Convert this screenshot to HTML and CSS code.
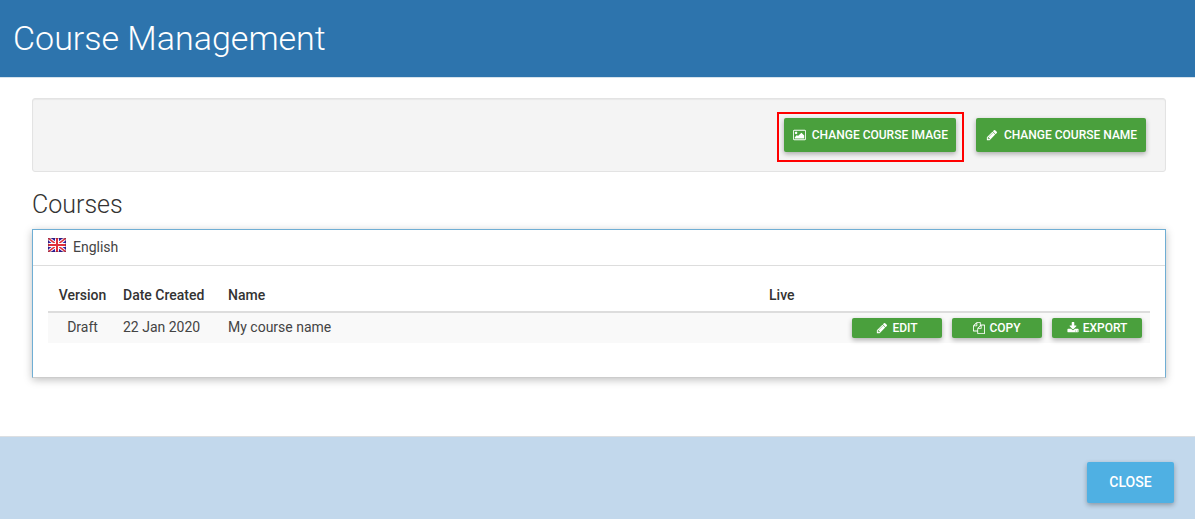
FILE: index.html
```html
<!DOCTYPE html>
<html lang="en">
<head>
<meta charset="utf-8">
<title>Course Management</title>
<link rel="stylesheet" href="styles.css">
</head>
<body>
<svg class="sprite" aria-hidden="true">
  <symbol id="pencil" viewBox="0 0 1792 1792"><path d="M491 1536l91-91-235-235-91 91v107h128v128h107zm523-928q0-22-22-22-10 0-17 7l-542 542q-7 7-7 17 0 22 22 22 10 0 17-7l542-542q7-7 7-17zm-54-192l416 416-832 832h-416v-416zm683 96q0 53-37 90l-166 166-416-416 166-165q36-38 90-38 53 0 91 38l235 234q37 39 37 91z"/></symbol>
  <symbol id="picture" viewBox="0 0 1920 1792"><path d="M640 576q0 80-56 136t-136 56-136-56-56-136 56-136 136-56 136 56 56 136zm1024 384v448h-1408v-192l320-320 160 160 512-512zm96-704h-1600q-13 0-22.500 9.500t-9.500 22.500v1216q0 13 9.500 22.500t22.500 9.500h1600q13 0 22.500-9.500t9.500-22.500v-1216q0-13-9.500-22.500t-22.500-9.500zm160 32v1216q0 66-47 113t-113 47h-1600q-66 0-113-47t-47-113v-1216q0-66 47-113t113-47h1600q66 0 113 47t47 113z"/></symbol>
  <symbol id="files" viewBox="0 0 1792 1792"><path d="M1696 384q40 0 68 28t28 68v1216q0 40-28 68t-68 28h-960q-40 0-68-28t-28-68v-288h-544q-40 0-68-28t-28-68v-672q0-40 20-88t48-76l408-408q28-28 76-48t88-20h416q40 0 68 28t28 68v328q68-40 128-40h416zm-544 213l-299 299h299v-299zm-640-384l-299 299h299v-299zm196 647l316-316v-416h-384v416q0 40-28 68t-68 28h-416v640h512v-256q0-40 20-88t48-76zm956 804v-1152h-384v416q0 40-28 68t-68 28h-416v640h896z"/></symbol>
  <symbol id="download" viewBox="0 0 1792 1792"><path d="M1344 1344q0-26-19-45t-45-19-45 19-19 45 19 45 45 19 45-19 19-45zm256 0q0-26-19-45t-45-19-45 19-19 45 19 45 45 19 45-19 19-45zm128-224v320q0 40-28 68t-68 28h-1472q-40 0-68-28t-28-68v-320q0-40 28-68t68-28h465l135 136q58 56 136 56t136-56l136-136h464q40 0 68 28t28 68zm-325-569q17 41-14 70l-448 448q-18 19-45 19t-45-19l-448-448q-31-29-14-70 17-39 59-39h256v-448q0-26 19-45t45-19h256q26 0 45 19t19 45v448h256q42 0 59 39z"/></symbol>
</svg>
<header class="page-header">
  <h1 class="page-title">Course Management</h1>
</header>
<main class="content">
  <div class="toolbar">
    <button type="button" class="btn btn-large highlighted"><svg class="icon icon-picture" aria-hidden="true"><use href="#picture"/></svg>CHANGE COURSE IMAGE</button>
    <button type="button" class="btn btn-large"><svg class="icon" aria-hidden="true"><use href="#pencil"/></svg>CHANGE COURSE NAME</button>
  </div>
  <h2 class="section-title">Courses</h2>
  <section class="panel">
    <div class="panel-heading">
      <svg class="flag" viewBox="0 0 18 14" aria-hidden="true">
        <rect width="18" height="14" fill="#2a1fa8"/>
        <path d="M0 0L18 14M18 0L0 14" stroke="#fff" stroke-width="3.500"/>
        <path d="M0 0L18 14M18 0L0 14" stroke="#e0303c" stroke-width="1.500"/>
        <path d="M9 0V14M0 7H18" stroke="#fff" stroke-width="4"/>
        <path d="M9 0V14M0 7H18" stroke="#e0303c" stroke-width="2"/>
        <rect x=".5" y=".5" width="17" height="13" fill="none" stroke="#401040" stroke-opacity=".35"/>
      </svg>
      <span>English</span>
    </div>
    <div class="panel-body">
      <table class="courses">
        <thead>
          <tr><th class="col-version" scope="col">Version</th><th class="col-date" scope="col">Date Created</th><th class="col-name" scope="col">Name</th><th scope="col" colspan="2">Live</th></tr>
        </thead>
        <tbody>
          <tr>
            <td class="col-version">Draft</td><td>22 Jan 2020</td><td>My course name</td><td></td>
            <td class="col-actions">
              <div class="actions">
                <button type="button" class="btn btn-small"><svg class="icon" aria-hidden="true"><use href="#pencil"/></svg>EDIT</button>
                <button type="button" class="btn btn-small"><svg class="icon" aria-hidden="true"><use href="#files"/></svg>COPY</button>
                <button type="button" class="btn btn-small"><svg class="icon" aria-hidden="true"><use href="#download"/></svg>EXPORT</button>
              </div>
            </td>
          </tr>
        </tbody>
      </table>
    </div>
  </section>
</main>
<footer class="page-footer">
  <button type="button" class="btn btn-close">CLOSE</button>
</footer>
</body>
</html>
```

FILE: styles.css
```css
* { box-sizing: border-box; }

body {
  margin: 0;
  min-height: 100vh;
  display: flex;
  flex-direction: column;
  background: #fff;
  color: #444;
  font: 14px/20px Roboto, "Liberation Sans", sans-serif;
}

.sprite { display: none; }

.page-header {
  padding: 18px 13px 19px;
  background: #2d74ad;
  border-bottom: 1px solid #d5e2ec;
}

.page-title {
  margin: 0;
  color: #fff;
  font-size: 34px;
  font-weight: 300;
  line-height: 40px;
}

.content {
  flex: 1;
  padding: 20px 29px 57px 32px;
}

.toolbar {
  display: flex;
  justify-content: flex-end;
  gap: 20px;
  padding: 19px;
  background: #f4f4f4;
  border: 1px solid #e3e3e3;
  border-radius: 3px;
  box-shadow: inset 0 1px 1px rgba(0, 0, 0, .05);
}

.btn {
  display: inline-flex;
  align-items: center;
  justify-content: center;
  border: 0;
  border-radius: 2px;
  background: #4aa03d;
  color: #fff;
  font-family: inherit;
  font-size: 12px;
  font-weight: 500;
  line-height: 18px;
  white-space: nowrap;
  box-shadow: 0 2px 5px rgba(0, 0, 0, .3);
  cursor: pointer;
}

.btn-large {
  position: relative;
  gap: 6px;
  min-width: 170px;
  padding: 8px 8px 8px 9px;
}

.highlighted::after {
  content: "";
  position: absolute;
  inset: -6px -8px -10px -7px;
  border: 2px solid #f00;
}

.icon {
  width: 12px;
  height: 12px;
  fill: currentColor;
}

.icon-picture { width: 13px; }

.section-title {
  margin: 18px 0 9px;
  color: #333;
  font-size: 25px;
  font-weight: 300;
  line-height: 30px;
}

.panel {
  border: 1px solid #6faed4;
  border-bottom-color: #ccc;
  background: #fff;
  box-shadow: 0 2px 8px rgba(0, 0, 0, .25);
}

.panel-heading {
  display: flex;
  align-items: flex-start;
  gap: 7px;
  padding: 7px 15px 8px;
  border-bottom: 1px solid #ddd;
}

.flag {
  width: 18px;
  height: 14px;
  margin-top: 1px;
}

.panel-body { padding: 15px 15px 34px; }

.courses {
  width: 100%;
  border-collapse: separate;
  border-spacing: 0;
}

.courses th,
.courses td {
  padding: 4px 8px 6px;
  text-align: left;
  vertical-align: top;
}

.courses th {
  border-bottom: 2px solid #ddd;
  color: #333;
  font-weight: 500;
}

.courses td { background: #f9f9f9; }

.courses .col-version {
  width: 67px;
  padding-left: 10px;
  text-align: center;
}

.courses .col-date { width: 105px; }

.courses .col-name { width: 541px; }

.courses .col-actions {
  padding-top: 5px;
  padding-bottom: 5px;
}

.actions {
  display: flex;
  justify-content: flex-end;
  gap: 10px;
}

.btn-small {
  width: 90px;
  gap: 4px;
  padding: 1px 4px;
}

.page-footer {
  display: flex;
  justify-content: flex-end;
  padding: 25px 21px 16px;
  background: #c2d8ec;
  border-top: 1px solid #dcdfe2;
}

.btn-close {
  min-width: 87px;
  padding: 10px 22px;
  background: #4fb0e3;
  font-size: 14px;
  line-height: 21px;
}
```
